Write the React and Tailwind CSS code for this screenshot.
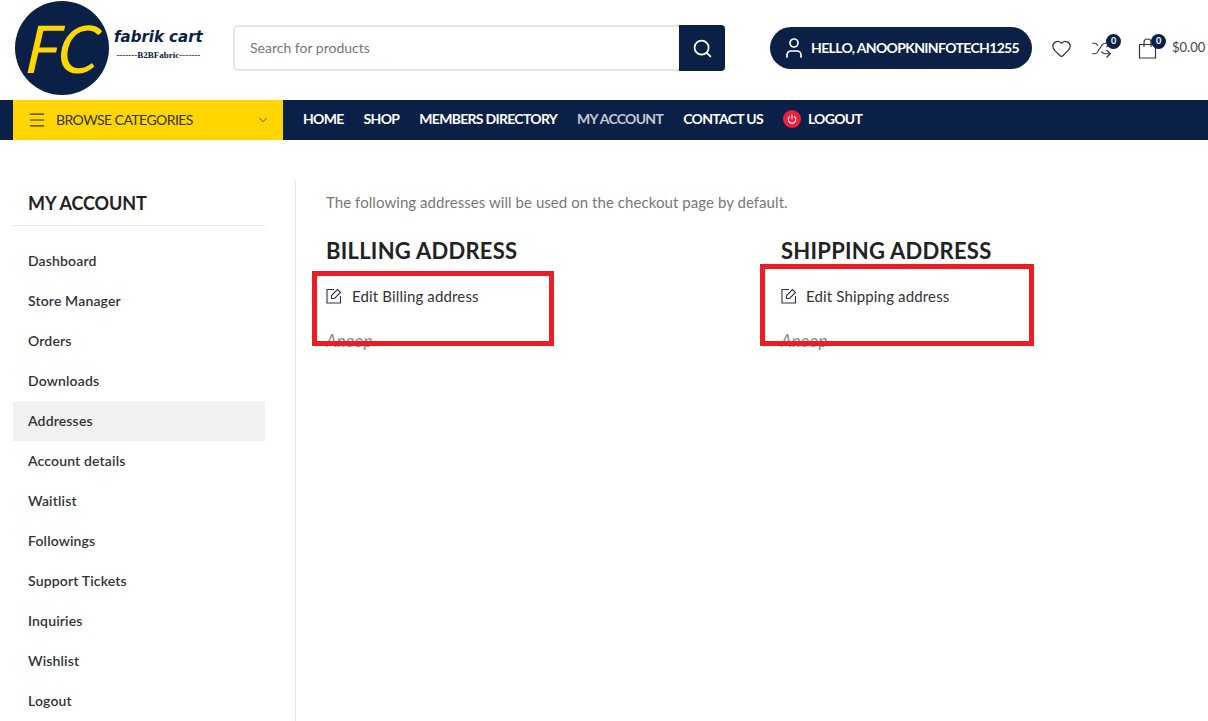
import { Search, User, Heart, Shuffle, Menu, ChevronDown, Power } from "lucide-react";

const navLinks = ["HOME", "SHOP", "MEMBERS DIRECTORY", "MY ACCOUNT", "CONTACT US"];
const sideLinks = [
  "Dashboard",
  "Store Manager",
  "Orders",
  "Downloads",
  "Addresses",
  "Account details",
  "Waitlist",
  "Followings",
  "Support Tickets",
  "Inquiries",
  "Wishlist",
  "Logout",
];

const Badge = ({ className }) => (
  <span className={`absolute flex h-[15px] w-[15px] items-center justify-center rounded-full bg-[#0a2046] text-[9px] font-bold text-white ${className}`}>
    0
  </span>
);

const BagIcon = () => (
  <svg width="19" height="21" viewBox="0 0 19 21" fill="none" stroke="#333" strokeWidth="1.2" className="block">
    <path d="M1.5 6.5h16v13.5h-16z" />
    <path d="M6 9V4.5a3.5 3.5 0 0 1 7 0V9" />
  </svg>
);

const EditIcon = () => (
  <svg width="16" height="16" viewBox="0 0 16 16" fill="none" stroke="#3a2a45" strokeWidth="1.1" className="shrink-0">
    <path d="M8 1.5H1v13.5h13.5V8" />
    <path d="M5.5 10.5V7.5l6-6 3 3-6 6z" />
  </svg>
);

const Logo = () => (
  <div className="flex w-[202px] items-center">
    <div className="flex h-[94px] w-[94px] shrink-0 items-center justify-center rounded-full bg-[#0a2046]">
      <span className="-skew-x-6 font-['Lato'] text-[66px] font-normal italic leading-none tracking-[-3px] text-[#ffd600]">FC</span>
    </div>
    <div className="ml-[5px] flex flex-col items-center pb-[10px]">
      <span className="whitespace-nowrap font-['DejaVu_Sans'] text-[15px] font-bold italic leading-[20px] text-[#0a2046]">
        fabrik cart
      </span>
      <span className="mt-[3px] whitespace-nowrap font-['Liberation_Serif'] text-[9px] font-bold leading-[10px] text-[#0a2046]">
        -------B2BFabric-------
      </span>
    </div>
  </div>
);

const Header = () => (
  <div className="flex h-[100px] items-center pl-[15px] font-['Lato']">
    <div className="-mt-[4px]">
      <Logo />
    </div>
    <div className="ml-[16px] -mt-[4px] flex h-[46px] w-[492px]">
      <div className="flex flex-1 items-center rounded-l-[5px] border-2 border-r-0 border-[#e6e6e6] pb-[2px] pl-[15px] text-[14px] text-[#777]">
        Search for products
      </div>
      <div className="flex w-[46px] items-center justify-center rounded-r-[4px] bg-[#0a2046]">
        <Search size={21} strokeWidth={2} className="text-white" />
      </div>
    </div>
    <div className="ml-[45px] -mt-[4px] flex h-[42px] w-[262px] items-center rounded-full bg-[#0a2046] pl-[12px] text-white">
      <User size={24} strokeWidth={1.7} />
      <span className="ml-[5px] whitespace-nowrap pb-[2px] text-[14px] font-bold tracking-[-0.65px]">HELLO, ANOOPKNINFOTECH1255</span>
    </div>
    <Heart size={21} strokeWidth={1.4} className="ml-[19px] -mt-[4px] text-[#333]" />
    <div className="relative ml-[19px] -mt-[4px]">
      <Shuffle size={21} strokeWidth={1.3} className="text-[#333]" />
      <Badge className="-right-[9px] -top-[4px]" />
    </div>
    <div className="relative ml-[26px] -mt-[4px]">
      <BagIcon />
      <Badge className="-right-[9px] -top-[4px]" />
    </div>
    <span className="ml-[15px] -mt-[4px] text-[13px] text-[#444]">$0.00</span>
  </div>
);

const Nav = () => (
  <div className="flex h-[40px] bg-[#0a2046] pl-[13px] font-['Lato']">
    <div className="flex w-[270px] items-center bg-[#ffd600] pl-[14px] pr-[13px] text-[#333]">
      <Menu size={20} strokeWidth={1.4} />
      <span className="ml-[9px] flex-1 pb-px text-[14px] tracking-[-0.55px]">BROWSE CATEGORIES</span>
      <ChevronDown size={14} strokeWidth={1.4} />
    </div>
    <div className="ml-[20px] flex items-center gap-[20px] pb-[4px] text-[14px] font-bold tracking-[-0.7px] text-white">
      {navLinks.map((link) => (
        <span key={link} className={link === "MY ACCOUNT" ? "whitespace-nowrap text-[#c3c8d1]" : "whitespace-nowrap"}>
          {link}
        </span>
      ))}
      <span className="flex items-center">
        <span className="mt-[2px] flex h-[18px] w-[18px] items-center justify-center rounded-full bg-[#f0203f]">
          <Power size={10} strokeWidth={2.6} />
        </span>
        <span className="ml-[7px]">LOGOUT</span>
      </span>
    </div>
  </div>
);

const Sidebar = () => (
  <div className="w-[296px] shrink-0 border-r border-[#e6e6e6] pl-[13px] pr-[30px]">
    <div className="flex h-[46px] items-center border-b border-[#e6e6e6] pl-[15px] pt-[1px] text-[18px] font-bold tracking-[-0.1px] text-[#222]">
      MY ACCOUNT
    </div>
    <div className="mt-[15px]">
      {sideLinks.map((link) => (
        <div
          key={link}
          className={`flex h-[40px] items-center pb-[2px] pl-[15px] text-[14px] font-semibold tracking-[0.15px] text-[#333] ${link === "Addresses" ? "bg-[#f1f1f1]" : ""}`}
        >
          {link}
        </div>
      ))}
    </div>
  </div>
);

const AddressCard = ({ title, edit, box, gap }) => (
  <div className="relative">
    <h3 className="text-[22px] font-bold leading-[28px] tracking-[0.25px] text-[#222]">{title}</h3>
    <div className="mt-[20px] flex items-center text-[15px] tracking-[0.15px] text-[#333]">
      <EditIcon />
      <span className={gap}>{edit}</span>
    </div>
    <div className="mt-[21px] text-[17px] italic leading-[24px] text-[#888]">Anoop</div>
    <div className={`absolute border-[5px] border-[#ed1c24] ${box}`}></div>
  </div>
);

export default function App() {
  return (
    <div className="h-[721px] overflow-hidden bg-white font-['Lato']">
      <Header />
      <Nav />
      <div className="mt-[40px] flex h-[541px]">
        <Sidebar />
        <div className="flex-1 pl-[30px] pt-[11px]">
          <p className="text-[15px] leading-[22px] tracking-[0.06px] text-[#777]">The following addresses will be used on the checkout page by default.</p>
          <div className="mt-[24px] grid w-[910px] grid-cols-2 gap-[0px]">
            <AddressCard title="BILLING ADDRESS" edit="Edit Billing address" gap="ml-[10px]" box="-left-[14px] top-[34px] h-[75px] w-[242px]" />
            <AddressCard title="SHIPPING ADDRESS" edit="Edit Shipping address" gap="ml-[9px]" box="-left-[21px] top-[27px] h-[82px] w-[274px]" />
          </div>
        </div>
      </div>
    </div>
  );
}
